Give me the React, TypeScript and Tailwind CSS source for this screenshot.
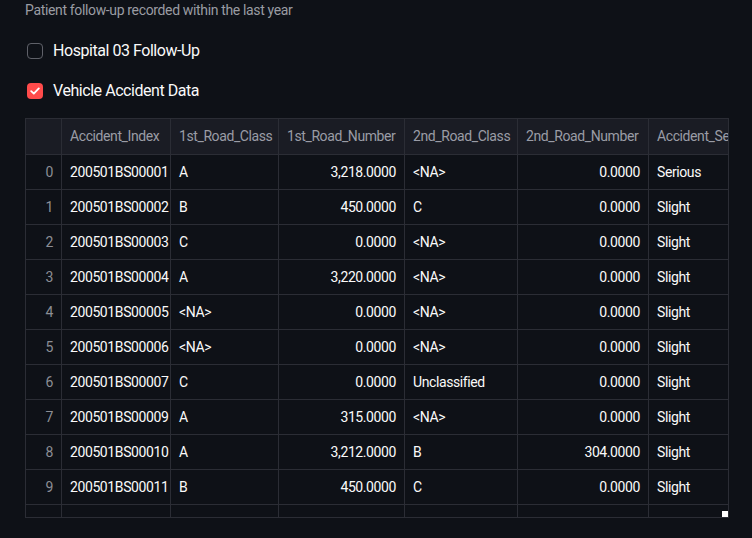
const font = { fontFamily: '"Source Sans Pro", Roboto, "Noto Sans", sans-serif' };

// ─────────────────────────────────────────
// Data
// ─────────────────────────────────────────

const columns = [
  { key: 'idx', label: '', width: 36, align: 'right' },
  { key: 'Accident_Index', label: 'Accident_Index', width: 109, align: 'left' },
  { key: 'r1c', label: '1st_Road_Class', width: 108, align: 'left' },
  { key: 'r1n', label: '1st_Road_Number', width: 126, align: 'right' },
  { key: 'r2c', label: '2nd_Road_Class', width: 113, align: 'left' },
  { key: 'r2n', label: '2nd_Road_Number', width: 131, align: 'right' },
  { key: 'sev', label: 'Accident_Severity', width: 130, align: 'left' },
] as const;

const tableWidth = columns.reduce((s, c) => s + c.width, 0);

const rows: string[][] = [
  ['0', '200501BS00001', 'A', '3,218.0000', '<NA>', '0.0000', 'Serious'],
  ['1', '200501BS00002', 'B', '450.0000', 'C', '0.0000', 'Slight'],
  ['2', '200501BS00003', 'C', '0.0000', '<NA>', '0.0000', 'Slight'],
  ['3', '200501BS00004', 'A', '3,220.0000', '<NA>', '0.0000', 'Slight'],
  ['4', '200501BS00005', '<NA>', '0.0000', '<NA>', '0.0000', 'Slight'],
  ['5', '200501BS00006', '<NA>', '0.0000', '<NA>', '0.0000', 'Slight'],
  ['6', '200501BS00007', 'C', '0.0000', 'Unclassified', '0.0000', 'Slight'],
  ['7', '200501BS00009', 'A', '315.0000', '<NA>', '0.0000', 'Slight'],
  ['8', '200501BS00010', 'A', '3,212.0000', 'B', '304.0000', 'Slight'],
  ['9', '200501BS00011', 'B', '450.0000', 'C', '0.0000', 'Slight'],
  ['', '', '', '', '', '', ''],
];

// ─────────────────────────────────────────
// Pieces
// ─────────────────────────────────────────

function Checkbox({ label, checked }: { label: string; checked?: boolean }) {
  return (
    <label className="flex items-center gap-[10px] h-[24px]">
      {checked ? (
        <span className="ml-[2px] w-[16px] h-[16px] rounded-[4px] bg-[#ff4b4b] flex items-center justify-center">
          <svg width="10" height="8" viewBox="0 0 10 8" fill="none">
            <path d="M1.2 4.2 L3.8 6.6 L8.8 1.4" stroke="#fff" strokeWidth="1.8" strokeLinecap="round" strokeLinejoin="round" />
          </svg>
        </span>
      ) : (
        <span className="ml-[2px] w-[16px] h-[16px] rounded-[4px] border-[1.5px] border-[#5f6169]" />
      )}
      <span className="text-[16px] tracking-[-0.45px] text-[#fafafa] leading-none">{label}</span>
    </label>
  );
}

function DataFrame() {
  return (
    <div className="relative w-[704px] h-[400px] border border-[#2b2d35] overflow-hidden">
      <table className="border-collapse table-fixed -mt-px -ml-px" style={{ width: tableWidth }}>
        <colgroup>
          {columns.map((c) => (
            <col key={c.key} style={{ width: c.width }} />
          ))}
        </colgroup>
        <thead>
          <tr className="h-[36px] bg-[#1a1c24]">
            {columns.map((c) => (
              <th
                key={c.key}
                className="border border-[#2b2d35] px-[8px] text-left font-normal text-[14px] tracking-[-0.4px] text-[#9a9ca6] whitespace-nowrap overflow-hidden"
              >
                {c.label}
              </th>
            ))}
          </tr>
        </thead>
        <tbody>
          {rows.map((r, i) => (
            <tr key={i} className="h-[35px]">
              {r.map((v, j) => (
                <td
                  key={j}
                  className={
                    'border border-[#2b2d35] px-[8px] text-[14px] tracking-[-0.4px] whitespace-nowrap overflow-hidden ' +
                    (columns[j].align === 'right' ? 'text-right ' : 'text-left ') +
                    (j === 0 ? 'text-[#8c8e95]' : 'text-[#fafafa]')
                  }
                >
                  {v}
                </td>
              ))}
            </tr>
          ))}
        </tbody>
      </table>
      <span className="absolute right-0 bottom-0 w-[6px] h-[6px] bg-white" />
    </div>
  );
}

// ─────────────────────────────────────────
// App
// ─────────────────────────────────────────

export default function App() {
  return (
    <div className="w-[752px] h-[538px] bg-[#0e1117] overflow-hidden" style={font}>
      <div className="pl-[25px] pt-[1px]">
        <p className="text-[14px] tracking-[-0.35px] text-[#9a9ca3] leading-[18px]">
          Patient follow-up recorded within the last year
        </p>
        <div className="mt-[20px] flex flex-col gap-[16px]">
          <Checkbox label="Hospital 03 Follow-Up" />
          <Checkbox label="Vehicle Accident Data" checked />
        </div>
        <div className="mt-[15px]">
          <DataFrame />
        </div>
      </div>
    </div>
  );
}
